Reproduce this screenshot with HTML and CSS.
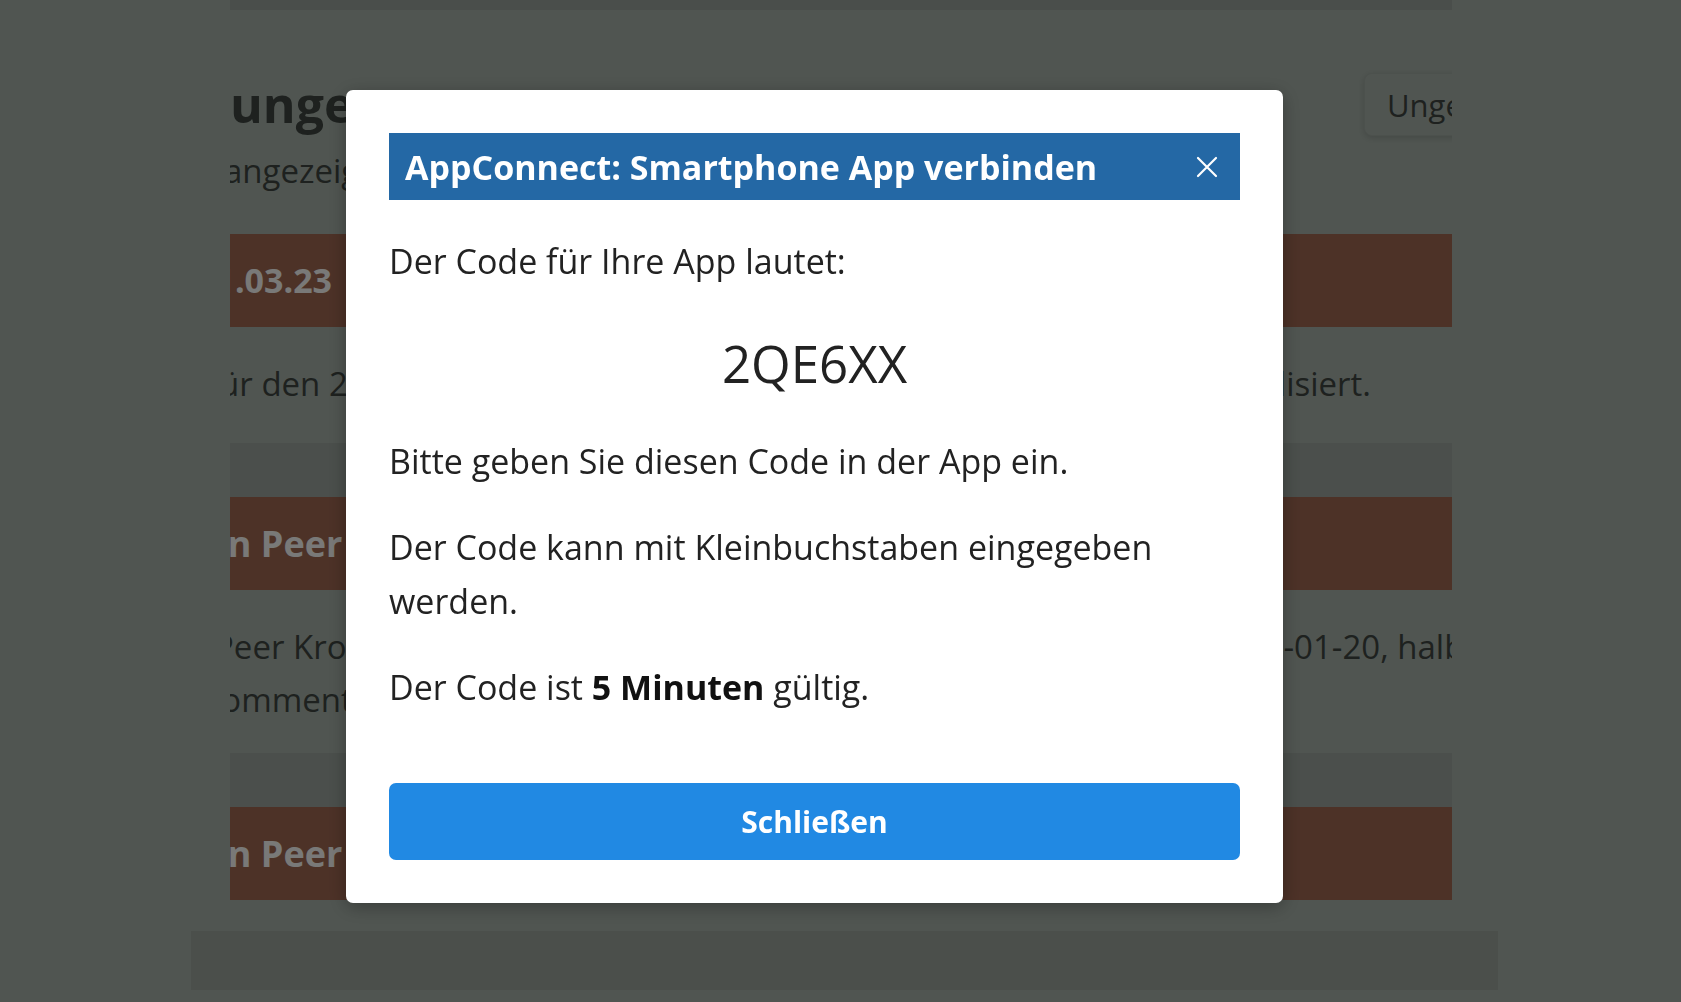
FILE: index.html
```html
<!DOCTYPE html>
<html lang="de">
<head>
    <meta charset="UTF-8">
    <meta name="viewport" content="width=device-width, initial-scale=1.0">
    <title>AppConnect</title>
    <link rel="stylesheet" href="styles.css">
</head>
<body>
    <div class="page">
        <div class="top-strip"></div>
        <div class="page-head">
            <h1>ungelesene Nachrichten</h1>
            <button class="head-btn">Ungelesen markieren</button>
        </div>
        <div class="subtitle">angezeigt werden alle neuen Einträge</div>

        <div class="entry-bar indent-date">21.03.23</div>
        <div class="entry-text row indent-fuer">
            <span class="row-left">für den 21.03.2023 wurden</span>
            <span class="row-right">die Umsätze aktualisiert.</span>
        </div>

        <div class="band"></div>
        <div class="entry-bar indent-von">von Peer</div>
        <div class="entry-lines">
            <div class="entry-text split indent-peer">
                <span class="split-left">Peer Krohn hat ein neues Dokument hochgeladen</span>
                <span>2023-01-20, halbjährlich</span>
            </div>
            <div class="entry-text indent-kom">kommentiert</div>
        </div>

        <div class="band"></div>
        <div class="entry-bar indent-von">von Peer</div>
    </div>
    <div class="footer-band"></div>

    <div class="overlay">
        <div class="modal">
            <div class="modal-head">
                <span class="modal-title">AppConnect: Smartphone App verbinden</span>
                <svg class="close-icon" width="22" height="22" viewBox="0 0 22 22">
                    <path d="M2 2 L20 20 M20 2 L2 20" stroke="#fff" stroke-width="2.2" stroke-linecap="round"/>
                </svg>
            </div>
            <p class="first">Der Code für Ihre App lautet:</p>
            <div class="code">2QE6XX</div>
            <p>Bitte geben Sie diesen Code in der App ein.</p>
            <p>Der Code kann mit Kleinbuchstaben eingegeben werden.</p>
            <p>Der Code ist <strong>5 Minuten</strong> gültig.</p>
            <button class="close-btn">Schließen</button>
        </div>
    </div>
</body>
</html>
```

FILE: styles.css
```css
body {
    margin: 0;
    font-family: 'Open Sans', 'Noto Sans', sans-serif;
    background-color: #a1aba3;
    color: #3c433e;
    height: 1002px;
    overflow: hidden;
}
.page {
    width: 1222px;
    margin-left: 230px;
    overflow: hidden;
}
.top-strip {
    height: 10px;
    background: #949d96;
}
.page-head {
    display: flex;
    justify-content: space-between;
    align-items: center;
    margin-top: 63px;
    height: 63px;
}
h1 {
    width: 116px;
    margin: 0;
    overflow: hidden;
    font-size: 50px;
    font-weight: 700;
    line-height: 63px;
    white-space: nowrap;
}
.head-btn {
    flex-shrink: 0;
    width: 240px;
    margin-right: -152px;
    height: 63px;
    padding: 0 0 0 22px;
    text-align: left;
    font-family: inherit;
    font-size: 31px;
    color: #3c433e;
    background: #a1aba3;
    border: 1px solid #99a29b;
    border-radius: 8px;
    box-shadow: 0 2px 6px rgba(0, 0, 0, 0.15);
    white-space: nowrap;
}
.subtitle {
    width: 116px;
    margin-top: 10px;
    overflow: hidden;
    font-size: 33px;
    line-height: 50px;
    white-space: nowrap;
    text-indent: -6px;
}
.entry-bar {
    margin-top: 38px;
    height: 93px;
    line-height: 93px;
    background: #9a644f;
    color: #f3f3f0;
    font-size: 34px;
    font-weight: 700;
    white-space: nowrap;
}
.band + .entry-bar {
    margin-top: 0;
}
.entry-text {
    margin-top: 30px;
    font-size: 33px;
    line-height: 53px;
    white-space: nowrap;
}
.row {
    display: flex;
    justify-content: space-between;
    padding-right: 81px;
}
.split {
    display: flex;
}
.split-left {
    flex: 0 0 994px;
    overflow: hidden;
}
.entry-lines {
    margin-top: 30px;
}
.entry-lines .entry-text {
    margin-top: 0;
}
.band {
    margin-top: 33px;
    height: 54px;
    background: #969f98;
}
.entry-lines + .band {
    margin-top: 27px;
}
.indent-date { text-indent: -34px; }
.indent-fuer { margin-left: -22px; }
.indent-von { text-indent: -45px; font-size: 36px; }
.indent-peer { margin-left: -16px; }
.indent-kom { text-indent: -26px; }

.footer-band {
    width: 1307px;
    height: 59px;
    margin: 31px 0 0 191px;
    background: #969e97;
}

.overlay {
    position: fixed;
    inset: 0;
    background: rgba(0, 0, 0, 0.5);
    display: flex;
    align-items: center;
    justify-content: center;
    padding: 0 52px 9px 0;
}
.modal {
    width: 851px;
    padding: 43px;
    background: #fff;
    border-radius: 7px;
    box-shadow: 0 4px 18px rgba(0, 0, 0, 0.3);
    color: #222;
}
.modal-head {
    display: flex;
    justify-content: space-between;
    align-items: center;
    height: 67px;
    padding: 0 22px 0 16px;
    background: #2468a5;
}
.modal-title {
    color: #fff;
    font-size: 34px;
    font-weight: 700;
}
.modal p {
    margin: 32px 0 0;
    font-size: 34px;
    line-height: 54px;
}
.modal p.first {
    margin-top: 34px;
}
.modal strong {
    color: #111;
}
.code {
    margin: 37px 0 33px;
    text-align: center;
    font-size: 51px;
    line-height: 76px;
}
.code + p {
    margin-top: 0;
}
.close-btn {
    display: block;
    width: 100%;
    height: 77px;
    margin-top: 69px;
    border: none;
    border-radius: 7px;
    background: #2189e3;
    color: #fff;
    font-family: inherit;
    font-size: 30px;
    font-weight: 700;
}
```
